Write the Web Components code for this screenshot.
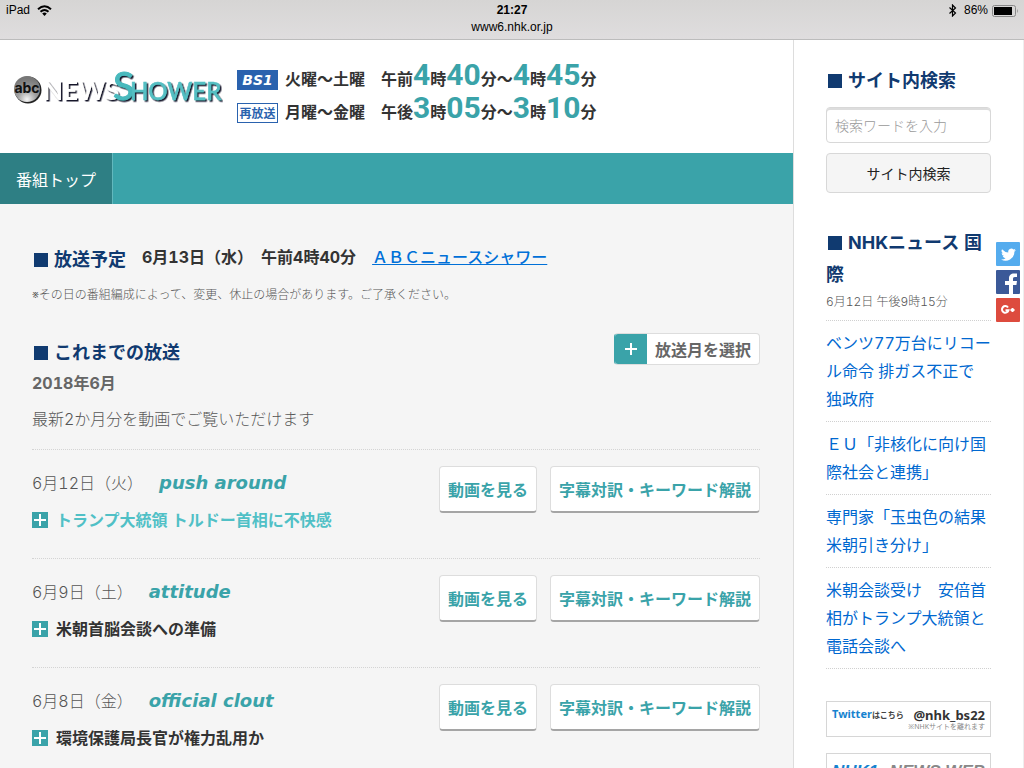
<!DOCTYPE html>
<html lang="ja">
<head>
<meta charset="utf-8">
<title>ABCニュースシャワー</title>
<style>
html,body{margin:0;height:100%}
body{font-family:Inter,"Noto Sans CJK JP",sans-serif;font-variant-numeric:tabular-nums;font-size:16px;color:#333}
</style>
</head>
<body>
<ipad-browser>
  <news-site slot="page"></news-site>
</ipad-browser>
<script>
function define(name, html) {
  const template = document.createElement('template');
  template.innerHTML = html;
  customElements.define(name, class extends HTMLElement {
    constructor() {
      super();
      this.attachShadow({mode: 'open'}).append(template.content.cloneNode(true));
    }
  });
}

define('status-bar', `
<style>
:host{display:block;box-sizing:border-box;height:40px;padding-top:2px;background:linear-gradient(#d6d5d4,#dfddde);border-bottom:1px solid #bcbcbc;color:#000;font:12px/17px "Liberation Sans",sans-serif}
.top{display:grid;grid-template-columns:1fr auto 1fr;padding:0 6px;align-items:center}
.left,.right{display:flex;align-items:center;gap:7px}
.right{justify-content:flex-end;gap:4px}
.time{font-weight:700;font-size:12px}
.url{text-align:center;font-size:12px}
svg{display:block}
</style>
<div class="top">
  <div class="left"><span>iPad</span>
    <svg width="15" height="11" viewBox="0 0 15 11" fill="none" stroke="#000" stroke-width="2"><path d="M1 4.300Q7.500-1.700 14 4.300M3.500 6.800Q7.500 3.200 11.500 6.800"/><path d="M5.200 8.500Q7.500 6.700 9.800 8.500L7.500 11Z" fill="#000" stroke="none"/></svg>
  </div>
  <span class="time">21:27</span>
  <div class="right">
    <svg width="9" height="13" viewBox="0 0 9 13" fill="none" stroke="#000" stroke-width="1.200"><path d="M1.500 3.500L7.500 9L4.500 12V1L7.500 4L1.500 9.500"/></svg>
    <span>&nbsp;86%</span>
    <svg width="26" height="12" viewBox="0 0 26 12"><rect x=".5" y=".5" width="23" height="11" rx="2" fill="none" stroke="#888"/><rect x="2" y="2" width="18" height="8" fill="#000"/><path d="M25 4q1.500 2 0 4z" fill="#888"/></svg>
  </div>
</div>
<div class="url">www6.nhk.or.jp</div>`);

define('ipad-browser', `
<style>
:host{display:grid;grid-template-rows:auto minmax(0,1fr);height:100vh;overflow:hidden}
.view{overflow:hidden;position:relative}
</style>
<status-bar></status-bar><div class="view"><slot name="page"></slot></div>`);

define('program-logo', `
<style>:host{display:block}svg{display:block}text{font-family:Lato,sans-serif}.abc{font-family:Inter,sans-serif}</style>
<svg width="210" height="60" viewBox="0 -14 210 60" role="img" aria-label="abc News Shower">
  <defs><radialGradient id="g" cx=".5" cy=".9" r=".8"><stop offset="0" stop-color="#f4f4f4"/><stop offset=".45" stop-color="#a0a0a0"/><stop offset="1" stop-color="#777"/></radialGradient>
  <filter id="s" x="-5%" y="-10%" width="112%" height="130%"><feDropShadow dx="1.500" dy="1.500" stdDeviation=".6" flood-color="#15152c"/></filter></defs>
  <circle cx="15" cy="21" r="13.500" fill="#222"/><circle cx="14" cy="20" r="13" fill="url(#g)"/>
  <text class="abc" x="14" y="24" text-anchor="middle" font-size="14" font-weight="700" fill="#111">abc</text>
  <g filter="url(#s)"><text x="30" y="31" font-size="26" font-weight="700" fill="#fff">NEWS</text>
  <text x="100" y="31" font-size="39" fill="#49b9bd" stroke="#49b9bd">S</text>
  <text x="117" y="31" font-size="24" font-weight="500" fill="#55bfc3" stroke="#55bfc3" stroke-width=".5">HOWER</text></g>
</svg>`);

define('on-air-time', `
<style>
:host{display:flex;align-items:flex-start;gap:7px;height:33px;font:700 16px/24px "Noto Sans CJK JP",sans-serif;white-space:pre}
.badge{box-sizing:border-box;width:41px;height:20px;margin-top:7px;border:1px solid #2a62ae;text-align:center;color:#2a62ae;background:#fff;font-size:12px;line-height:18px}
:host([solid]) .badge{background:#2a62ae;color:#fff;font:italic 700 14px/18px "DejaVu Sans",sans-serif}
.t ::slotted(b){color:#3aa3a9;font:700 30px/24px Roboto,sans-serif}
</style>
<span class="badge"><slot name="badge"></slot></span><span class="t"><slot></slot></span>`);

define('section-title', `
<style>:host{display:block}h2{margin:0;font-size:18px;line-height:32px;font-weight:700;color:#103a70}.m{display:inline-block;width:14px;height:14px;margin:0 6px 0 2px;background:#103a70;vertical-align:-1px}</style>
<h2><span class="m"></span><slot></slot></h2>`);

define('action-button', `
<style>:host{display:block}button{box-sizing:border-box;height:47px;padding:0 8px;border:1px solid #ddd;border-bottom:2px solid #a5a5a5;border-radius:4px;background:#fff;color:#3aa3a9;font:inherit;font-weight:700;white-space:nowrap;display:block}</style>
<button type="button"><slot></slot></button>`);

define('episode-row', `
<style>
:host{display:flex;justify-content:space-between;align-items:flex-start;border-top:1px dotted #d4d4d4;padding:16px 0 27px}
.text{padding-top:1px}
.d{display:flex;align-items:center;gap:16px;height:32px;line-height:32px;color:#555;font-weight:300}
.k{font:italic 700 18px/32px "DejaVu Sans",sans-serif;color:#3aa3a9}
.h{display:flex;align-items:center;gap:8px;font-weight:700;margin:10px 0 0;font-size:16px;line-height:22px}
:host([active]) .h{color:#50c0c6}
.a{display:flex;gap:13px}
svg{display:block}
</style>
<div class="text"><div class="d"><slot name="date"></slot><span class="k"><slot name="phrase"></slot></span></div>
<h3 class="h"><svg width="16" height="16"><rect width="16" height="16" fill="#3aa3a9"/><path d="M2 8H14M8 2V14" stroke="#fff" stroke-width="2"/></svg><slot></slot></h3></div>
<div class="a"><action-button>動画を見る</action-button><action-button>字幕対訳・キーワード解説</action-button></div>`);

define('month-picker', `
<style>:host{display:block}button{display:flex;align-items:center;box-sizing:border-box;height:32px;padding:0 8px 0 0;border:1px solid #ddd;border-left-color:#3aa3a9;border-radius:4px;background:#fff;overflow:hidden;color:#666;font:inherit;font-weight:700;gap:8px}
.p{display:grid;place-items:center;width:32px;height:32px;background:#3aa3a9}</style>
<button type="button"><span class="p"><svg width="14" height="14"><path d="M1 7H13M7 1V13" stroke="#fff" stroke-width="2"/></svg></span>放送月を選択</button>`);

define('site-search', `
<style>
:host{display:block}form{display:grid;gap:10px;margin:10px 0 34px}
input,button{box-sizing:border-box;width:100%;border:1px solid #d8d8d8;border-radius:4px;font:inherit;font-size:14px}
input{height:36px;padding:0 8px;box-shadow:inset 0 2px 0 #ddd;background:#fff;font-weight:300}
input::placeholder{color:#999}
button{height:40px;background:#f5f5f5;color:#222}
</style>
<section-title>サイト内検索</section-title>
<form onsubmit="return false"><input type="text" aria-label="検索ワード" placeholder="検索ワードを入力"><button type="submit">サイト内検索</button></form>`);

define('headline-link', `
<style>:host{display:block;border-bottom:1px dotted #d0d0d0;padding:8px 0}a{display:block;color:#0068d0;text-decoration:none;line-height:28px;font-weight:400;white-space:nowrap}</style>
<a href="#"><slot></slot></a>`);

define('side-bar', `
<style>
:host{display:block;padding:25px 32px 0;background:#fff;border-right:1px solid #eee;border-left:1px solid #ddd}
.date{margin:0;font-size:12px;line-height:22px;color:#555;font-weight:300;padding-bottom:7px;border-bottom:1px dotted #d0d0d0}
.ban{display:block;box-sizing:border-box;height:36px;border:1px solid #d6d6d6;text-decoration:none;white-space:nowrap;padding:5px;line-height:14px}
.tw{margin:32px 0 16px;text-align:right;font-family:"Noto Sans","Noto Sans CJK JP",sans-serif}
.row{display:flex;justify-content:space-between;align-items:center;font-weight:700}
.t{font-size:11px;color:#1683cf}.t small{font-size:8px;color:#444}.u{font-size:13px;color:#333}
.n{display:block;font-size:7px;line-height:10px;color:#888}
.web{display:flex;justify-content:space-between;font:italic 700 17px/26px "Liberation Sans",sans-serif;color:#888}
.web b{color:#1683cf}
</style>
<site-search></site-search>
<section-title>NHKニュース 国<br>際</section-title>
<p class="date">6月12日 午後9時15分</p>
<headline-link>ベンツ77万台にリコー<br>ル命令 排ガス不正で<br>独政府</headline-link>
<headline-link>ＥＵ「非核化に向け国<br>際社会と連携」</headline-link>
<headline-link>専門家「玉虫色の結果<br>米朝引き分け」</headline-link>
<headline-link>米朝会談受け　安倍首<br>相がトランプ大統領と<br>電話会談へ</headline-link>
<a class="ban tw" href="#"><span class="row"><span class="t">Twitter<small>はこちら</small></span><span class="u">@nhk_bs22</span></span><span class="n">※NHKサイトを離れます</span></a>
<a class="ban web" href="#"><b>NHK1</b><span>NEWS WEB</span></a>`);

define('share-links', `
<style>:host{display:grid;gap:4px;position:absolute;right:4px;top:202px}a,svg{display:block}</style>
<a href="#" aria-label="Twitter"><svg width="24" height="24"><rect width="24" height="24" rx="1" fill="#55acee"/><path transform="translate(5 5) scale(.62)" fill="#fff" d="M23.900 4.900a10 10 0 0 1-2.800.8 5 5 0 0 0 2.200-2.700c-1 .6-2 1-3.100 1.200a4.900 4.900 0 0 0-8.400 4.500A14 14 0 0 1 1.700 3.600a4.900 4.900 0 0 0 1.500 6.600c-.8 0-1.600-.2-2.200-.6a4.900 4.900 0 0 0 3.900 4.900c-.7.200-1.500.2-2.200.1a4.900 4.900 0 0 0 4.600 3.400A9.900 9.900 0 0 1 0 20a14 14 0 0 0 21.500-12.500c1-.7 1.800-1.600 2.400-2.600z"/></svg></a>
<a href="#" aria-label="Facebook"><svg width="24" height="24"><rect width="24" height="24" rx="1" fill="#3b5998"/><path fill="#fff" d="M13 24v-9h-4v-4h4V8.500C13 5 15 3.500 18 3.500h3V7h-2c-1.700 0-2 .8-2 2v2h4l-.6 4H17v9z"/></svg></a>
<a href="#" aria-label="Google+"><svg width="24" height="24"><rect width="24" height="24" rx="1" fill="#dd4b3e"/><path fill="none" stroke="#fff" stroke-width="2" d="M12 9.500A3.300 3.300 0 1 0 12.500 12.200H9.500M14.500 12h4M16.500 10v4"/></svg></a>`);

define('news-site', `
<style>
:host{display:grid;grid-template-columns:minmax(0,1fr) 231px;min-height:100%}
.col{background:#f5f5f5}
header{display:flex;background:#fff;height:113px;box-sizing:border-box;padding:15px 13px;gap:14px;align-items:flex-start}
.times{padding-top:8px}
nav{display:flex;background:#3aa3a9;height:51px}
nav a{display:grid;place-items:center;padding:0 16px;background:#2e7f84;border-right:1px solid #62b8bd;color:#fff;text-decoration:none}
main{padding:40px 33px 0 32px}
.next{display:flex;align-items:flex-start;gap:16px;line-height:26px;font-weight:700}
.when{display:flex;gap:8px}
.next a{color:#0070d8;font-weight:500}
.note{margin:7px 0 0;font-size:12px;line-height:24px;color:#555;font-weight:300}
.past{display:flex;justify-content:space-between;align-items:flex-start;margin-top:26px}
.heads{padding-top:4px}
.month{margin:0;font-weight:700;color:#666;line-height:28px}
.info{margin:8px 0 16px;line-height:28px;color:#555;font-weight:300}
</style>
<div class="col">
<header><program-logo></program-logo><div class="times">
<on-air-time solid><span slot="badge">BS1</span>火曜～土曜　午前<b>4</b>時<b>40</b>分～<b>4</b>時<b>45</b>分</on-air-time>
<on-air-time><span slot="badge">再放送</span>月曜～金曜　午後<b>3</b>時<b>05</b>分～<b>3</b>時<b>10</b>分</on-air-time>
</div></header>
<nav><a href="#">番組トップ</a></nav>
<main>
<div class="next"><section-title>放送予定</section-title><div class="when"><span>6月13日（水）</span><span>午前4時40分</span></div><a href="#">ＡＢＣニュースシャワー</a></div>
<p class="note">※その日の番組編成によって、変更、休止の場合があります。ご了承ください。</p>
<div class="past"><div class="heads"><section-title>これまでの放送</section-title><p class="month">2018年6月</p></div><month-picker></month-picker></div>
<p class="info">最新2か月分を動画でご覧いただけます</p>
<episode-row active><span slot="date">6月12日（火）</span><span slot="phrase">push around</span>トランプ大統領 トルドー首相に不快感</episode-row>
<episode-row><span slot="date">6月9日（土）</span><span slot="phrase">attitude</span>米朝首脳会談への準備</episode-row>
<episode-row><span slot="date">6月8日（金）</span><span slot="phrase">official clout</span>環境保護局長官が権力乱用か</episode-row>
</main></div>
<side-bar></side-bar>
<share-links></share-links>`);
</script>
</body>
</html>
